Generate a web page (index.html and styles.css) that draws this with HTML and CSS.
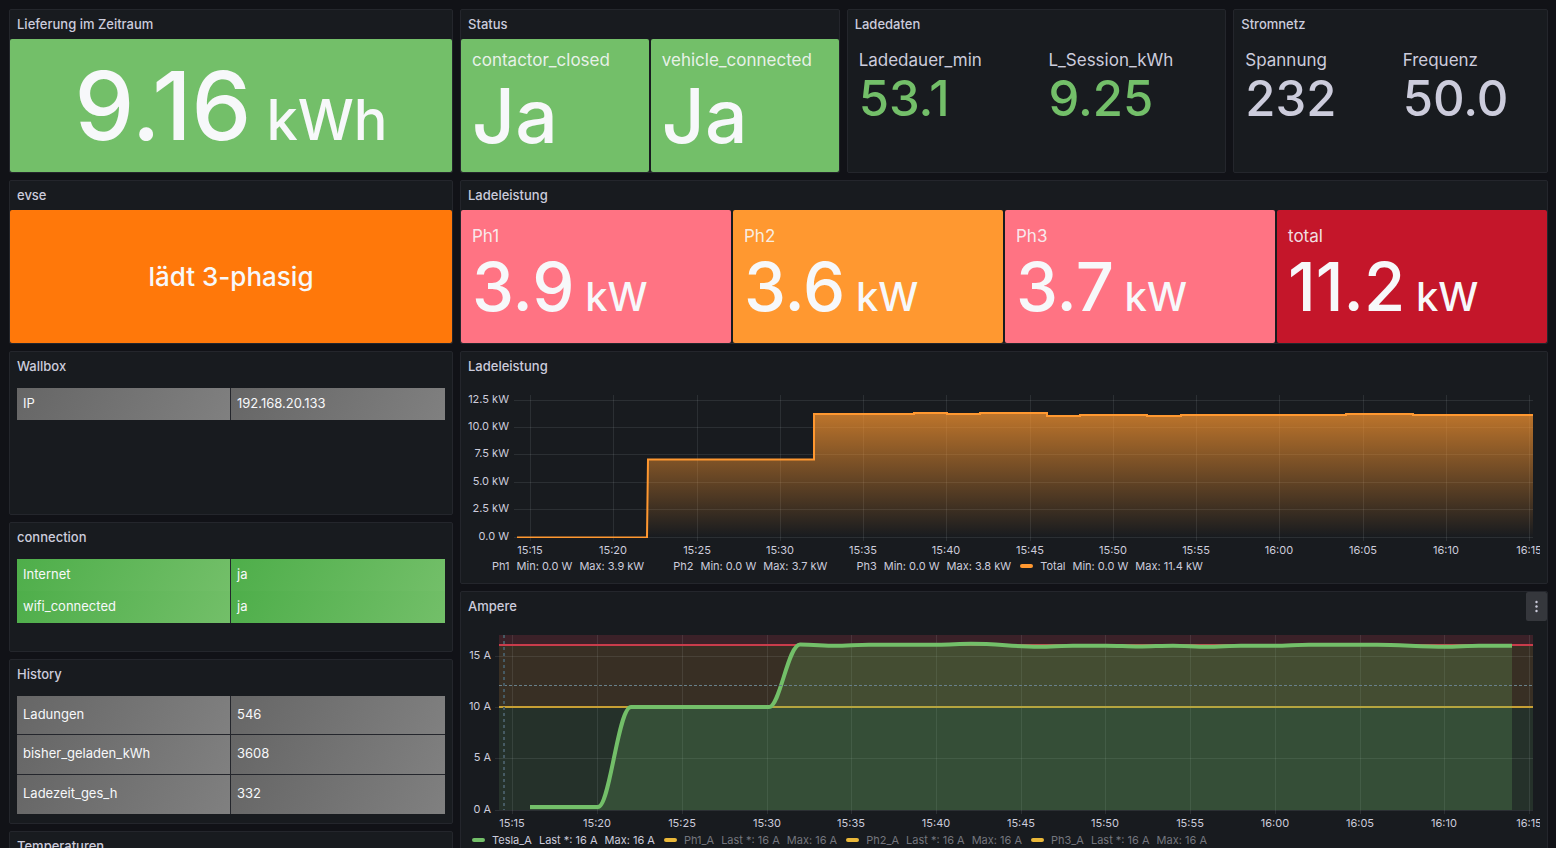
FILE: index.html
```html
<!DOCTYPE html>
<html lang="de">
<head>
<meta charset="utf-8">
<meta name="viewport" content="width=device-width, initial-scale=1">
<title>Wallbox</title>
<link rel="stylesheet" href="styles.css">
</head>
<body>
<main class="dashboard">
  <div class="column">
    <section class="panel">
      <header class="panel-header"><h2>Lieferung im Zeitraum</h2></header>
      <div class="tiles">
        <div class="tile centered green"><p class="value huge">9.16<span class="unit"> kWh</span></p></div>
      </div>
    </section>
    <section class="panel">
      <header class="panel-header"><h2>evse</h2></header>
      <div class="tiles">
        <div class="tile centered deep-orange"><p class="value message">lädt 3-phasig</p></div>
      </div>
    </section>
    <section class="panel tall">
      <header class="panel-header"><h2>Wallbox</h2></header>
      <div class="panel-body">
        <table class="cells gray">
          <tr><td>IP</td><td>192.168.20.133</td></tr>
        </table>
      </div>
    </section>
    <section class="panel medium">
      <header class="panel-header"><h2>connection</h2></header>
      <div class="panel-body">
        <table class="cells ok">
          <tr><td>Internet</td><td>ja</td></tr>
          <tr><td>wifi_connected</td><td>ja</td></tr>
        </table>
      </div>
    </section>
    <section class="panel tall">
      <header class="panel-header"><h2>History</h2></header>
      <div class="panel-body">
        <table class="cells gray ruled">
          <tr><td>Ladungen</td><td>546</td></tr>
          <tr><td>bisher_geladen_kWh</td><td>3608</td></tr>
          <tr><td>Ladezeit_ges_h</td><td>332</td></tr>
        </table>
      </div>
    </section>
    <section class="panel tall">
      <header class="panel-header"><h2>Temperaturen</h2></header>
    </section>
  </div>

  <div class="column">
    <div class="top-row">
      <section class="panel">
        <header class="panel-header"><h2>Status</h2></header>
        <div class="tiles">
          <div class="tile green"><p class="label">contactor_closed</p><p class="value large">Ja</p></div>
          <div class="tile green"><p class="label">vehicle_connected</p><p class="value large">Ja</p></div>
        </div>
      </section>
      <section class="panel">
        <header class="panel-header"><h2>Ladedaten</h2></header>
        <div class="tiles">
          <div class="tile plain good"><p class="label">Ladedauer_min</p><p class="value small">53.1</p></div>
          <div class="tile plain good"><p class="label">L_Session_kWh</p><p class="value small">9.25</p></div>
        </div>
      </section>
      <section class="panel">
        <header class="panel-header"><h2>Stromnetz</h2></header>
        <div class="tiles">
          <div class="tile plain"><p class="label">Spannung</p><p class="value small">232</p></div>
          <div class="tile plain"><p class="label">Frequenz</p><p class="value small">50.0</p></div>
        </div>
      </section>
    </div>

    <section class="panel">
      <header class="panel-header"><h2>Ladeleistung</h2></header>
      <div class="tiles">
        <div class="tile pink"><p class="label">Ph1</p><p class="value">3.9<span class="unit"> kW</span></p></div>
        <div class="tile orange"><p class="label">Ph2</p><p class="value">3.6<span class="unit"> kW</span></p></div>
        <div class="tile pink"><p class="label">Ph3</p><p class="value">3.7<span class="unit"> kW</span></p></div>
        <div class="tile red"><p class="label">total</p><p class="value">11.2<span class="unit"> kW</span></p></div>
      </div>
    </section>

    <section class="panel">
      <header class="panel-header"><h2>Ladeleistung</h2></header>
      <div class="panel-body">
        <svg class="chart" viewBox="0 0 1072 170" role="img" aria-label="Ladeleistung">
          <defs>
            <linearGradient id="power" gradientUnits="userSpaceOnUse" x1="0" y1="25" x2="0" y2="149">
              <stop offset="0" stop-color="#ff9830" stop-opacity="0.72"/>
              <stop offset="1" stop-color="#ff9830" stop-opacity="0"/>
            </linearGradient>
            <clipPath id="plot"><rect x="46" y="7" width="1019" height="143"/></clipPath>
          </defs>
          <path class="grid" d="M46 12.5H1065M46 39.5H1065M46 66.5H1065M46 94.5H1065M46 121.5H1065M46 149.5H1065"/>
          <path class="grid" d="M62.500 7V153M145.500 7V153M229.500 7V153M312.500 7V153M395.500 7V153M478.500 7V153M562.500 7V153M645.500 7V153M728.500 7V153M811.500 7V153M895.500 7V153M978.500 7V153M1061.500 7V153"/>
          <path fill="url(#power)" d="M179 149.500L180 71.500H346V26H446V25H479V26H512V25H579V28H612V27H679V28H713V27H878V26H945V27H1065V149.500Z"/>
          <path class="power-line" clip-path="url(#plot)" d="M49 149.500H179L180 71.500H346V26H446V25H479V26H512V25H579V28H612V27H679V28H713V27H878V26H945V27H1065"/>
          <g class="axis-y">
            <text x="41" y="15">12.5 kW</text>
            <text x="41" y="42">10.0 kW</text>
            <text x="41" y="69">7.5 kW</text>
            <text x="41" y="97">5.0 kW</text>
            <text x="41" y="124">2.5 kW</text>
            <text x="41" y="152">0.0 W</text>
          </g>
          <g class="axis-x">
            <text x="62" y="166">15:15</text><text x="145" y="166">15:20</text><text x="229" y="166">15:25</text>
            <text x="312" y="166">15:30</text><text x="395" y="166">15:35</text><text x="478" y="166">15:40</text>
            <text x="562" y="166">15:45</text><text x="645" y="166">15:50</text><text x="728" y="166">15:55</text>
            <text x="811" y="166">16:00</text><text x="895" y="166">16:05</text><text x="978" y="166">16:10</text>
            <text x="1061" y="166">16:15</text>
          </g>
        </svg>
        <ul class="legend">
          <li><i class="swatch"></i><span>Ph1</span><span>Min: 0.0 W</span><span>Max: 3.9 kW</span></li>
          <li><i class="swatch"></i><span>Ph2</span><span>Min: 0.0 W</span><span>Max: 3.7 kW</span></li>
          <li><i class="swatch"></i><span>Ph3</span><span>Min: 0.0 W</span><span>Max: 3.8 kW</span></li>
          <li><i class="swatch orange"></i><span>Total</span><span>Min: 0.0 W</span><span>Max: 11.4 kW</span></li>
        </ul>
      </div>
    </section>

    <section class="panel">
      <header class="panel-header">
        <h2>Ampere</h2>
        <button class="menu" type="button" aria-label="Menü">
          <svg width="3" height="13" viewBox="0 0 3 13" aria-hidden="true"><circle cx="1.500" cy="2" r="1.200"/><circle cx="1.500" cy="6.500" r="1.200"/><circle cx="1.500" cy="11" r="1.200"/></svg>
        </button>
      </header>
      <div class="panel-body">
        <svg class="chart" viewBox="0 0 1072 204" role="img" aria-label="Ampere">
          <rect class="band-high" x="31" y="7" width="1034" height="10"/>
          <rect class="band-mid" x="31" y="17" width="1034" height="62"/>
          <rect class="band-low" x="31" y="79" width="1034" height="103"/>
          <path class="grid" d="M27 28.500H1065M27 79.500H1065M27 130.500H1065M27 182.500H1065"/>
          <path class="grid" d="M44.500 7V186M129.500 7V186M214.500 7V186M299.500 7V186M383.500 7V186M468.500 7V186M553.500 7V186M637.500 7V186M722.500 7V186M807.500 7V186M892.500 7V186M976.500 7V186M1061.500 7V186"/>
          <path class="limit-high" d="M31 17H1065"/>
          <path class="limit-mid" d="M31 79H1065"/>
          <path class="current-area" d="M62 179H130C142 179 150 79 163 79H301C312 79 320 16.500 332 16.500C345 16.500 356 17.700 367 17.700S390 16.700 401 16.700H470C481 16.700 492 15.800 503 15.800C530 15.800 545 18.700 571 18.700C582 18.700 594 17.700 605 17.700H638C649 17.700 660 18.500 671 18.500S694 17.700 705 17.700S728 18.700 739 18.700S762 17.700 773 17.700H807C818 17.700 830 16.700 841 16.700H909C930 16.700 955 18.700 977 18.700C988 18.700 1000 17.700 1011 17.700H1044V182H62Z"/>
          <path class="current-line" d="M62 179H130C142 179 150 79 163 79H301C312 79 320 16.500 332 16.500C345 16.500 356 17.700 367 17.700S390 16.700 401 16.700H470C481 16.700 492 15.800 503 15.800C530 15.800 545 18.700 571 18.700C582 18.700 594 17.700 605 17.700H638C649 17.700 660 18.500 671 18.500S694 17.700 705 17.700S728 18.700 739 18.700S762 17.700 773 17.700H807C818 17.700 830 16.700 841 16.700H909C930 16.700 955 18.700 977 18.700C988 18.700 1000 17.700 1011 17.700H1044"/>
          <path class="cursor-y" d="M31 57.500H1065"/>
          <path class="cursor-x" d="M36 7V182"/>
          <g class="axis-y">
            <text x="23" y="31">15 A</text>
            <text x="23" y="82">10 A</text>
            <text x="23" y="133">5 A</text>
            <text x="23" y="185">0 A</text>
          </g>
          <g class="axis-x">
            <text x="44" y="199">15:15</text><text x="129" y="199">15:20</text><text x="214" y="199">15:25</text>
            <text x="299" y="199">15:30</text><text x="383" y="199">15:35</text><text x="468" y="199">15:40</text>
            <text x="553" y="199">15:45</text><text x="637" y="199">15:50</text><text x="722" y="199">15:55</text>
            <text x="807" y="199">16:00</text><text x="892" y="199">16:05</text><text x="976" y="199">16:10</text>
            <text x="1061" y="199">16:15</text>
          </g>
        </svg>
        <ul class="legend">
          <li><i class="swatch green"></i><span>Tesla_A</span><span>Last *: 16 A</span><span>Max: 16 A</span></li>
          <li class="off"><i class="swatch yellow"></i><span>Ph1_A</span><span>Last *: 16 A</span><span>Max: 16 A</span></li>
          <li class="off"><i class="swatch yellow"></i><span>Ph2_A</span><span>Last *: 16 A</span><span>Max: 16 A</span></li>
          <li class="off"><i class="swatch yellow"></i><span>Ph3_A</span><span>Last *: 16 A</span><span>Max: 16 A</span></li>
        </ul>
      </div>
    </section>
  </div>
</main>
</body>
</html>
```
FILE: styles.css
```css
* { box-sizing: border-box; }

body {
  margin: 0;
  background: #111217;
  color: #ccccdc;
  font: 13px/20px Inter, "Liberation Sans", sans-serif;
}

h2, p, ul { margin: 0; padding: 0; }

.dashboard {
  display: grid;
  grid-template-columns: minmax(0, 444fr) minmax(0, 1088fr);
  gap: 7px;
  align-items: start;
  height: 100vh;
  padding: 9px 8px 0 9px;
  overflow: hidden;
}

.column { display: flex; flex-direction: column; gap: 7px; }

.top-row {
  display: grid;
  grid-template-columns: 380fr 380fr 315fr;
  gap: 7px;
}

.panel {
  background: #181b1f;
  border: 1px solid #24262c;
  border-radius: 2px;
}
.panel.medium { min-height: 130px; }
.panel.tall { min-height: 164px; }

.panel-header {
  display: flex;
  align-items: flex-start;
  justify-content: space-between;
  height: 29px;
  padding-left: 7px;
}
.panel-header h2 { font-size: 13px; font-weight: 500; line-height: 28px; }

.panel-body { padding: 7px 7px 9px; }

.menu {
  display: grid;
  place-items: center;
  width: 21px;
  height: 29px;
  padding: 0;
  border: 0;
  border-radius: 2px;
  background: #35373c;
  fill: #ccccdc;
}

.tiles {
  display: grid;
  grid-auto-flow: column;
  grid-auto-columns: minmax(0, 1fr);
  gap: 2px;
}

.tile {
  display: flex;
  flex-direction: column;
  justify-content: center;
  height: 133px;
  padding: 11px;
  border-radius: 2px;
  color: #f7f8fa;
  line-height: 1.2;
  white-space: nowrap;
}
.tile.centered { align-items: center; }
.tile.plain { justify-content: flex-start; color: #ccccdc; }
.tile.good .value { color: #73bf69; }

.label { font-size: 17px; }
.tile:not(.plain) .label { color: rgba(247, 248, 250, 0.9); }

.value { font-size: 67px; font-weight: 500; }
.value .unit { font-size: 40px; }
.value.huge { font-size: 95px; }
.value.huge .unit { font-size: 56px; }
.value.large { font-size: 75px; }
.value.small { font-size: 49px; }
.value.message { font-size: 26px; }

.green { background: #73bf69; }
.orange { background: #ff9830; }
.deep-orange { background: #ff780a; }
.pink { background: #ff7383; }
.red { background: #c4162a; }
.yellow { background: #eab839; }

.cells {
  width: 100%;
  table-layout: fixed;
  border-collapse: separate;
  border-spacing: 0;
  color: #f7f8fa;
}
.cells td {
  height: 32px;
  padding: 0 6px 2px;
  background-clip: padding-box;
}
.cells td:first-child { border-right: 1px solid #24262c; }
.cells.gray td { background-image: linear-gradient(120deg, #666666, #808080); }
.cells.ok td { background-image: linear-gradient(120deg, #4eae4a, #73bf69); }
.cells.ruled { height: 118px; }
.cells.ruled td { height: 39px; }
.cells.ruled tr:not(:last-child) td { border-bottom: 1px solid #24262c; }

.chart { display: block; width: 100%; height: auto; overflow: hidden; }
.chart path { fill: none; }
.chart path[fill] { fill: url(#power); }
.grid { stroke: rgba(240, 250, 255, 0.09); }
.power-line { stroke: #ff9830; stroke-width: 2; }
.band-high { fill: #3b2128; }
.band-mid { fill: #382f24; }
.band-low { fill: #25312a; }
.limit-high { stroke: #c93c4b; stroke-width: 2; }
.limit-mid { stroke: #c79f34; stroke-width: 2; }
.chart .current-area { fill: rgba(115, 191, 105, 0.21); }
.current-line { stroke: #73bf69; stroke-width: 4; }
.cursor-x { stroke: #465a63; stroke-width: 2; stroke-dasharray: 3 3; }
.cursor-y { stroke: #69808a; stroke-dasharray: 3 2; }
.chart text { fill: #ccccdc; font-size: 11px; }
.axis-y { text-anchor: end; }
.axis-x { text-anchor: middle; }

.legend {
  display: flex;
  flex-wrap: wrap;
  gap: 0 9px;
  padding-left: 4px;
  list-style: none;
  font-size: 11px;
  line-height: 16px;
}
.legend li { display: flex; align-items: center; gap: 7px; }
.legend .off { color: #74767e; }
.swatch { width: 13px; height: 4px; border-radius: 2px; }
```
